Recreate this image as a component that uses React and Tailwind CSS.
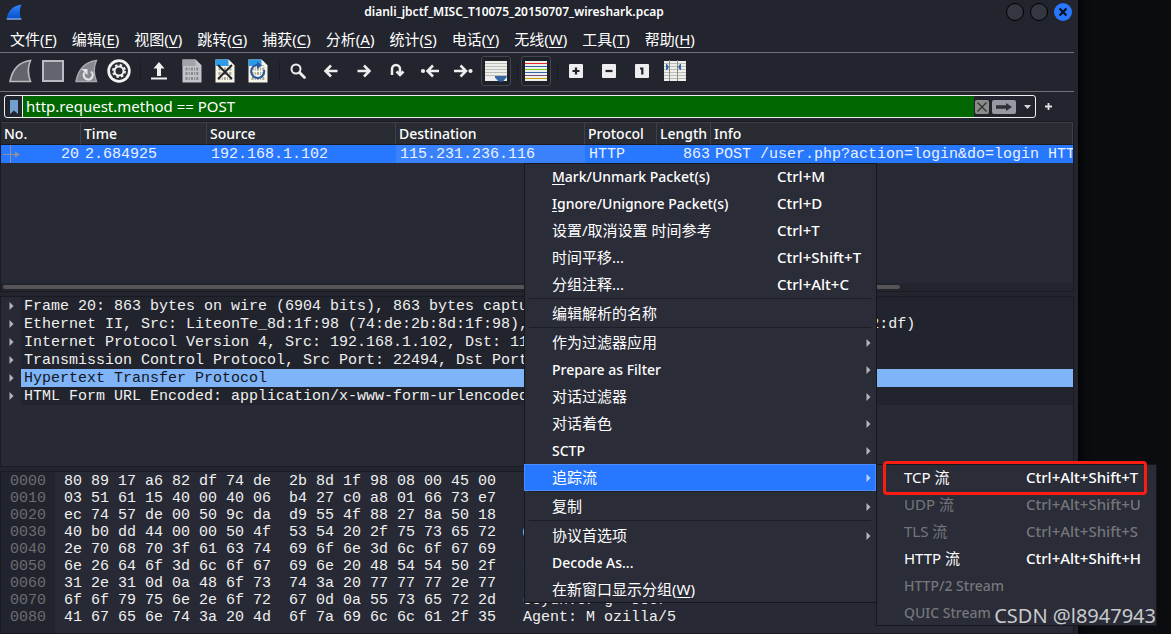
import { useState } from "react";

const menus = [
  ["文件", "F"],
  ["编辑", "E"],
  ["视图", "V"],
  ["跳转", "G"],
  ["捕获", "C"],
  ["分析", "A"],
  ["统计", "S"],
  ["电话", "Y"],
  ["无线", "W"],
  ["工具", "T"],
  ["帮助", "H"],
];

const details = [
  "Frame 20: 863 bytes on wire (6904 bits), 863 bytes captured (6904 bits)",
  "Ethernet II, Src: LiteonTe_8d:1f:98 (74:de:2b:8d:1f:98), Dst: Tp-LinkT_a6:82:df (80:89:17:a6:82:df)",
  "Internet Protocol Version 4, Src: 192.168.1.102, Dst: 115.231.236.116",
  "Transmission Control Protocol, Src Port: 22494, Dst Port: 80, Seq: 1, Ack: 1, Len: 809",
  "Hypertext Transfer Protocol",
  "HTML Form URL Encoded: application/x-www-form-urlencoded",
];

const hexDump = [
  "80 89 17 a6 82 df 74 de  2b 8d 1f 98 08 00 45 00",
  "03 51 61 15 40 00 40 06  b4 27 c0 a8 01 66 73 e7",
  "ec 74 57 de 00 50 9c da  d9 55 4f 88 27 8a 50 18",
  "40 b0 dd 44 00 00 50 4f  53 54 20 2f 75 73 65 72",
  "2e 70 68 70 3f 61 63 74  69 6f 6e 3d 6c 6f 67 69",
  "6e 26 64 6f 3d 6c 6f 67  69 6e 20 48 54 54 50 2f",
  "31 2e 31 0d 0a 48 6f 73  74 3a 20 77 77 77 2e 77",
  "6f 6f 79 75 6e 2e 6f 72  67 0d 0a 55 73 65 72 2d",
  "41 67 65 6e 74 3a 20 4d  6f 7a 69 6c 6c 61 2f 35",
];

const contextMenu = [
  { mnemonic: "M", label: "ark/Unmark Packet(s)", keys: "Ctrl+M", latin: true },
  { mnemonic: "I", label: "gnore/Unignore Packet(s)", keys: "Ctrl+D", latin: true },
  { label: "设置/取消设置 时间参考", keys: "Ctrl+T" },
  { label: "时间平移...", keys: "Ctrl+Shift+T" },
  { label: "分组注释...", keys: "Ctrl+Alt+C" },
  { separator: true },
  { label: "编辑解析的名称" },
  { separator: true },
  { label: "作为过滤器应用", sub: true },
  { label: "Prepare as Filter", sub: true, latin: true },
  { label: "对话过滤器", sub: true },
  { label: "对话着色", sub: true },
  { label: "SCTP", sub: true, latin: true },
  { label: "追踪流", sub: true, active: true },
  { separator: true },
  { label: "复制", sub: true },
  { separator: true },
  { label: "协议首选项", sub: true },
  { label: "Decode As...", latin: true },
  { label: "在新窗口显示分组(", after: "W" },
];

const followMenu = [
  { label: "TCP 流", keys: "Ctrl+Alt+Shift+T" },
  { label: "UDP 流", keys: "Ctrl+Alt+Shift+U", disabled: true },
  { label: "TLS 流", keys: "Ctrl+Alt+Shift+S", disabled: true },
  { label: "HTTP 流", keys: "Ctrl+Alt+Shift+H" },
  { label: "HTTP/2 Stream", disabled: true, latin: true },
  { label: "QUIC Stream", disabled: true, latin: true },
];

// Printable characters of a hex line, in two groups of eight
const toAscii = (line) => {
  const text = line
    .split(/\s+/)
    .map((b) => {
      const code = parseInt(b, 16);
      return code >= 32 && code < 127 ? String.fromCharCode(code) : "·";
    })
    .join("");
  return text.slice(0, 8) + " " + text.slice(8);
};

/* ---------- Icons ---------- */

const FIN = "M2 22.5C4 12 10 3 22.5 1.5C19.5 8 20 16 22.5 22.5Z";

function Logo() {
  return (
    <svg width="16" height="16" viewBox="0 0 24 24">
      <defs>
        <linearGradient id="fin" x1="0" y1="0" x2="0" y2="1">
          <stop offset="0" stopColor="#2f86ff" />
          <stop offset="1" stopColor="#0a4fc8" />
        </linearGradient>
      </defs>
      <path d="M1 22C3 11 10 2 23 1C20 8 20 16 22.500 22Z" fill="url(#fin)" />
      <path d="M1 22.500H23" stroke="#8fb8f5" strokeWidth="2" />
    </svg>
  );
}

function Fin() {
  return (
    <svg width="24" height="24" viewBox="0 0 24 24">
      <path d={FIN} fill="#62656d" stroke="#b9bbbf" strokeWidth="1.6" />
    </svg>
  );
}

function Stop() {
  return (
    <svg width="24" height="24" viewBox="0 0 24 24">
      <rect x="2" y="2" width="20" height="20" fill="#62656d" stroke="#b9bbc2" strokeWidth="2" />
    </svg>
  );
}

function Restart() {
  return (
    <svg width="24" height="24" viewBox="0 0 24 24">
      <path d={FIN} fill="#85888e" stroke="#a7a9ae" strokeWidth="1.4" />
      <path d="M17 12.500A4.500 4.500 0 1 1 10.500 13.500" fill="none" stroke="#e6e6e8" strokeWidth="2.200" />
      <path d="M7.500 10H13.500V16Z" fill="#e6e6e8" />
    </svg>
  );
}

function Options() {
  return (
    <svg width="24" height="24" viewBox="0 0 24 24">
      <circle cx="12" cy="12" r="11.700" fill="#f2f2f2" />
      <circle cx="12" cy="12" r="9" fill="#2a2c33" />
      <circle cx="12" cy="12" r="4.500" fill="none" stroke="#f2f2f2" strokeWidth="2" />
      <circle cx="12" cy="12" r="6" fill="none" stroke="#f2f2f2" strokeWidth="2" strokeDasharray="2.400 2.312" />
    </svg>
  );
}

function Open() {
  return (
    <svg width="24" height="24" viewBox="0 0 24 24">
      <path d="M12 3L17.500 9.500H14V17H10V9.500H6.500Z" fill="#f0f0f0" />
      <rect x="4" y="18.500" width="16" height="2" fill="#f0f0f0" />
    </svg>
  );
}

function BitsFile({ page, band, ink, children }) {
  return (
    <svg width="24" height="24" viewBox="0 0 24 24">
      <path d="M2.500 0.500H15.500L21.500 6.500V23.500H2.500Z" fill={page} />
      <path d="M2.500 0.500H15.500L18 4V7H2.500Z" fill={band} />
      <path d="M15.500 0.500L21.500 6.500H15.500Z" fill={page} />
      <path
        d="M5.500 10H19M5.500 14.500H19M5.500 19.500H19"
        stroke={ink}
        strokeWidth="3"
        strokeDasharray="2 1.200 1 1.200"
      />
      {children}
    </svg>
  );
}

function Search() {
  return (
    <svg width="24" height="24" viewBox="0 0 24 24" fill="none" stroke="#eee">
      <circle cx="10" cy="10" r="4.500" strokeWidth="2" />
      <path d="M13.500 13.500L18.500 18.500" strokeWidth="2.800" strokeLinecap="round" />
    </svg>
  );
}

function Arrow({ d, dot }) {
  return (
    <svg width="24" height="24" viewBox="0 0 24 24" fill="none" stroke="#eee" strokeWidth="2.500">
      <path d={d} />
      {dot && <circle cx={dot} cy="12" r="2.100" fill="#eee" stroke="none" />}
    </svg>
  );
}

function AutoScroll() {
  return (
    <svg width="24" height="24" viewBox="0 0 24 24">
      <rect x="1" y="2" width="22" height="20" fill="#eeeeec" />
      <path d="M1 4.500H23M1 7.500H23M1 10.500H23M1 13.500H23M1 16.500H23" stroke="#babdb6" />
      <path d="M11 17H22.500V18.500L19 22.500H14.500L11 18.500Z" fill="#3465a4" />
    </svg>
  );
}

function Colorize() {
  return (
    <svg width="24" height="24" viewBox="0 0 24 24">
      <rect x="1" y="2" width="22" height="20" fill="#eeeeec" />
      <path d="M1 4.500H23" stroke="#ef2929" />
      <path d="M1 7.500H23M1 13.500H23" stroke="#3465a4" />
      <path d="M1 10.500H23" stroke="#73d216" />
      <path d="M1 16.500H23" stroke="#75507b" />
      <path d="M1 19.500H23" stroke="#c4a000" />
    </svg>
  );
}

function Zoom({ d }) {
  return (
    <svg width="24" height="24" viewBox="0 0 24 24">
      <rect x="5" y="5" width="14" height="14" rx="1" fill="#eee" />
      <path d={d} stroke="#23252e" strokeWidth="2.200" fill="none" />
    </svg>
  );
}

function Columns() {
  return (
    <svg width="24" height="24" viewBox="0 0 24 24">
      <rect x="1" y="2" width="22" height="20" fill="#eeeeec" />
      <path d="M1 4.500H23M1 7.500H23M1 10.500H23M1 13.500H23M1 16.500H23M1 19.500H23" stroke="#babdb6" />
      <path d="M6.500 1V22M14.500 1V22" stroke="#888a85" />
      <path d="M3 5H4L6 8L4 11H3ZM18 5H17L15 8L17 11H18Z" fill="#3465a4" />
    </svg>
  );
}

function Triangle({ className }) {
  return (
    <svg width="5" height="8" viewBox="0 0 5 8" className={className}>
      <path d="M0.500 0L4.500 4L0.500 8Z" fill="currentColor" />
    </svg>
  );
}

const toolbar = [
  { name: "Start", icon: <Fin /> },
  { name: "Stop", icon: <Stop /> },
  { name: "Restart", icon: <Restart /> },
  { name: "Options", icon: <Options /> },
  { separator: true },
  { name: "Open", icon: <Open /> },
  { name: "Save", icon: <BitsFile page="#c3c4c9" band="#a2a4aa" ink="#85878c" /> },
  {
    name: "Close",
    icon: (
      <BitsFile page="#f6f5e6" band="#2f9be6" ink="#a3a397">
        <path d="M5 6L19 20M19 6L5 20" stroke="#1d2226" strokeWidth="1.800" />
      </BitsFile>
    ),
  },
  {
    name: "Reload",
    icon: (
      <BitsFile page="#f6f5e6" band="#2f9be6" ink="#a3a397">
        <path d="M18 11A6.500 6.500 0 1 1 11.500 6" fill="none" stroke="#2a57a0" strokeWidth="2" />
        <path d="M11 2.500L16 6.500L11 10Z" fill="#2a57a0" />
      </BitsFile>
    ),
  },
  { separator: true },
  { name: "Find", icon: <Search /> },
  { name: "Previous", icon: <Arrow d="M18.500 12H7M12 6.500L6.500 12L12 17.500" /> },
  { name: "Next", icon: <Arrow d="M5.500 12H17M12 6.500L17.500 12L12 17.500" /> },
  { name: "Go to", icon: <Arrow d="M7 16V10A4 4 0 0 1 15 10V16M11.500 12.500L15 16L18.500 12.500" /> },
  { name: "First", icon: <Arrow dot="5" d="M21 12H10M15 6.500L9.500 12L15 17.500" /> },
  { name: "Last", icon: <Arrow dot="19.500" d="M3 12H14M9.500 6.500L15 12L9.500 17.500" /> },
  { name: "Auto scroll", icon: <AutoScroll />, pressed: true },
  { separator: true },
  { name: "Colorize", icon: <Colorize />, pressed: true },
  { separator: true },
  { name: "Zoom in", icon: <Zoom d="M8.500 12H15.500M12 8.500V15.500" /> },
  { name: "Zoom out", icon: <Zoom d="M8.500 12H15.500" /> },
  { name: "Normal size", icon: <Zoom d="M10 9.500H12.300V15.500" /> },
  { name: "Resize columns", icon: <Columns /> },
];

/* ---------- Parts ---------- */

function TitleBar() {
  return (
    <header className="flex h-6 items-center pl-1.5 pr-1.5">
      <Logo />
      <h1 className="flex-1 text-center text-[12px] font-semibold text-white">
        dianli_jbctf_MISC_T10075_20150707_wireshark.pcap
      </h1>
      <div className="flex gap-1.5">
        <button aria-label="Minimize" className="h-[18px] w-[18px] rounded-full border border-black bg-[#343741]" />
        <button aria-label="Maximize" className="h-[18px] w-[18px] rounded-full border border-black bg-[#343741]" />
        <button aria-label="Close" className="flex h-[18px] w-[18px] items-center justify-center rounded-full bg-[#2777ff]">
          <svg width="8" height="8" viewBox="0 0 8 8">
            <path d="M0.500 0.500L7.500 7.500M7.500 0.500L0.500 7.500" stroke="#0b1020" strokeWidth="2.200" />
          </svg>
        </button>
      </div>
    </header>
  );
}

function MenuItem({ item, labelWidth }) {
  return (
    <button
      role="menuitem"
      disabled={item.disabled}
      className={`flex h-[27px] w-full items-center whitespace-nowrap ${
        item.active ? "border border-[#4d8dff] bg-[#2777ff] pl-[27px] pr-1" : "pl-7 pr-[5px]"
      } text-left ${item.disabled ? "text-[#75767b]" : "text-white"}`}
    >
      <span className={`${labelWidth} ${item.latin ? "text-[14px] font-medium" : "text-[15px]"}`}>
        {item.mnemonic && <span className="underline underline-offset-2">{item.mnemonic}</span>}
        {item.label}
        {item.after && (
          <>
            <span className="underline underline-offset-2">{item.after}</span>)
          </>
        )}
      </span>
      {item.keys && <span className="text-[15px] font-medium">{item.keys}</span>}
      {item.sub && <Triangle className={`ml-auto ${item.active ? "text-[#b9d2ff]" : "text-[#b4b5b9]"}`} />}
    </button>
  );
}

function PacketList() {
  const th = "h-[23px] border-b border-r border-t border-b-[#1a1b22] border-r-[#3d4047] border-t-[#3d4047] px-[3px] text-left font-medium leading-5";
  return (
    <section className="flex h-[171px] flex-col border border-[#1a1b22] bg-[#272934]">
      <table className="w-full table-fixed border-separate border-spacing-0">
        <colgroup>
          <col className="w-[80px]" />
          <col className="w-[126px]" />
          <col className="w-[189px]" />
          <col className="w-[189px]" />
          <col className="w-[72px]" />
          <col className="w-[54px]" />
          <col />
        </colgroup>
        <thead>
          <tr className="bg-[#292c33] text-[14px] text-white">
            <th className={th}>No.</th>
            <th className={th}>Time</th>
            <th className={th}>Source</th>
            <th className={th}>Destination</th>
            <th className={th}>Protocol</th>
            <th className={th}>Length</th>
            <th className={th}>Info</th>
          </tr>
        </thead>
        <tbody className="font-['Liberation_Mono',monospace] text-[15px] leading-4 text-[#eaf1ff]">
          <tr className="bg-[#2777ff]">
            <td>
              <div className="flex h-[18px] items-center justify-between pl-0.5 pr-[2px]">
                <svg width="18" height="18" viewBox="0 0 18 18" className="text-[#8f9298]">
                  <path d="M0 9.500H14M7.500 0V18" stroke="currentColor" />
                  <path d="M12 6.500L17 9.500L12 12.500Z" fill="currentColor" />
                </svg>
                <span className="pt-0.5">20</span>
              </div>
            </td>
            <td className="px-1 pt-0.5">2.684925</td>
            <td className="px-1 pt-0.5">192.168.1.102</td>
            <td className="bg-[#3a82fc] px-1 pt-0.5">115.231.236.116</td>
            <td className="px-1 pt-0.5">HTTP</td>
            <td className="pr-px pt-0.5 text-right">863</td>
            <td className="overflow-hidden whitespace-nowrap pl-1 pt-0.5">
              POST /user.php?action=login&amp;do=login HTTP/1.1
            </td>
          </tr>
        </tbody>
      </table>
      <div className="mt-auto bg-[#23252e] px-0.5 py-0.5">
        <div className="h-1 w-[84%] rounded-full bg-[#555558]" />
      </div>
    </section>
  );
}

function PacketDetails() {
  return (
    <section className="h-[171px] border border-[#1a1b22] bg-[#272934]">
      <ul className="font-['Liberation_Mono',monospace] text-[15px] leading-4 text-[#f0f0f0]">
        {details.map((line, i) => (
          <li key={line} className="flex items-center whitespace-nowrap">
            <Triangle className="ml-2 mr-[7px] shrink-0 text-[#b4b5b9]" />
            <span
              className={`flex-1 overflow-hidden pl-[3px] pt-0.5 ${
                i === 4 ? "bg-[#7fb5f8] text-[#14161c]" : "bg-[#22242d]"
              }`}
            >
              {line}
            </span>
          </li>
        ))}
      </ul>
    </section>
  );
}

function PacketBytes() {
  return (
    <section className="flex flex-1 border border-[#1a1b22] bg-[#272934] font-['Liberation_Mono',monospace] text-[15px] leading-[17px] text-[#f0f0f0]">
      <div className="w-[54px] bg-[#22242d] pl-[9px] pt-px text-[#6b6d73]">
        {hexDump.map((line, i) => (
          <div key={line}>{"00" + i + "0"}</div>
        ))}
      </div>
      <div className="whitespace-pre pl-[9px] pt-px">
        {hexDump.map((line) => (
          <div key={line}>{line + "   " + toAscii(line)}</div>
        ))}
      </div>
    </section>
  );
}

export default function App() {
  const [filter, setFilter] = useState("http.request.method == POST");

  return (
    <div className="relative min-h-screen overflow-hidden bg-[#0b0c0f] pr-[93px] font-['Noto_Sans','Noto_Sans_CJK_SC',sans-serif]">
      <div className="flex min-h-screen flex-col bg-[#23252e] shadow-[2px_0_8px_#000]">
        <TitleBar />

        <div className="flex min-h-0 flex-1 flex-col pr-1">
          <nav className="flex h-[29px] items-center gap-[15px] border-b border-[#6f7178] pl-2.5 text-[15px] text-white">
            {menus.map(([label, key]) => (
              <button key={key} className="whitespace-nowrap pt-0.5">
                {label}(<span className="underline underline-offset-2">{key}</span>)
              </button>
            ))}
          </nav>

          <div className="flex h-[39px] items-center border-b border-[#6f7178] pb-0.5 pl-[3px]">
            {toolbar.map((tool, i) =>
              tool.separator ? (
                <div key={i} className="ml-[5px] mr-px h-5 w-px bg-[#1c1d24]" />
              ) : (
                <div key={i} className="w-[33px] pl-0.5">
                  <button
                    aria-label={tool.name}
                    className={`flex h-[30px] w-[30px] items-center justify-center rounded-[3px] border ${
                      tool.pressed ? "border-[#43464d] bg-[#1f2128]" : "border-transparent"
                    }`}
                  >
                    {tool.icon}
                  </button>
                </div>
              )
            )}
          </div>

          {/* Display filter */}
          <div className="flex items-center py-[3px] pl-1 pr-[22px]">
            <div className="flex h-[23px] flex-1 overflow-hidden rounded-[3px] border border-[#f0f0f0]">
              <button aria-label="Bookmarks" className="flex w-[18px] items-center justify-center border-r border-[#f0f0f0]">
                <svg width="8" height="14" viewBox="0 0 8 14">
                  <path d="M0 0H8V14L4 10.500L0 14Z" fill="#729fcf" />
                </svg>
              </button>
              <input
                aria-label="Display filter"
                value={filter}
                onChange={(e) => setFilter(e.target.value)}
                className="min-w-0 flex-1 bg-[#006600] pl-[3px] text-[15px] text-white outline-none"
              />
              <div className="flex items-center gap-[3px] pl-px">
                <button aria-label="Clear" className="flex h-[14px] w-[14px] items-center justify-center rounded-[2px] bg-[#8a8c88]">
                  <svg width="10" height="10" viewBox="0 0 10 10">
                    <path d="M0.500 0.500L9.500 9.500M9.500 0.500L0.500 9.500" stroke="#2e3436" strokeWidth="1.400" />
                  </svg>
                </button>
                <button aria-label="Apply" className="flex h-[14px] w-6 items-center justify-center rounded-[2px] bg-[#9698a2]">
                  <svg width="16" height="8" viewBox="0 0 16 8">
                    <path d="M0 2.300H10V0L16 4L10 8V5.700H0Z" fill="#2e3038" />
                  </svg>
                </button>
                <button aria-label="Recent filters" className="flex w-4 justify-center">
                  <svg width="7" height="4" viewBox="0 0 7 4">
                    <path d="M0 0H7L3.500 4Z" fill="#d8d8da" />
                  </svg>
                </button>
              </div>
            </div>
            <button aria-label="Add filter" className="ml-[9px] w-[7px]">
              <svg width="7" height="7" viewBox="0 0 7 7">
                <path d="M0 3.500H7M3.500 0V7" stroke="#e0e0e2" strokeWidth="1.800" />
              </svg>
            </button>
          </div>

          <main className="flex flex-1 flex-col gap-1">
            <PacketList />
            <PacketDetails />
            <PacketBytes />
          </main>
        </div>
      </div>

      {/* Context menu */}
      <div role="menu" className="absolute left-[524px] top-[163px] w-[353px] bg-[#2a2c37] pr-px ring-1 ring-[#16171d] ring-inset">
        {contextMenu.map((item, i) =>
          item.separator ? (
            <div key={i} className="mx-[5px] mb-px h-px bg-[#1d1e25]" />
          ) : (
            <MenuItem key={i} item={item} labelWidth="w-[225px]" />
          )
        )}
      </div>
      <div role="menu" className="absolute left-[876px] top-[464px] w-[281px] bg-[#2a2c37] ring-1 ring-[#16171d] ring-inset">
        {followMenu.map((item) => (
          <MenuItem key={item.label} item={item} labelWidth="w-[122px]" />
        ))}
        <div className="pointer-events-none absolute -top-[3px] left-[7px] h-[34px] w-[264px] rounded-[4px] border-[3px] border-[#fb1d12]" />
      </div>

      <p className="absolute bottom-[3px] right-[15px] text-[20px] text-[#c9cacd]">CSDN @l8947943</p>
    </div>
  );
}
